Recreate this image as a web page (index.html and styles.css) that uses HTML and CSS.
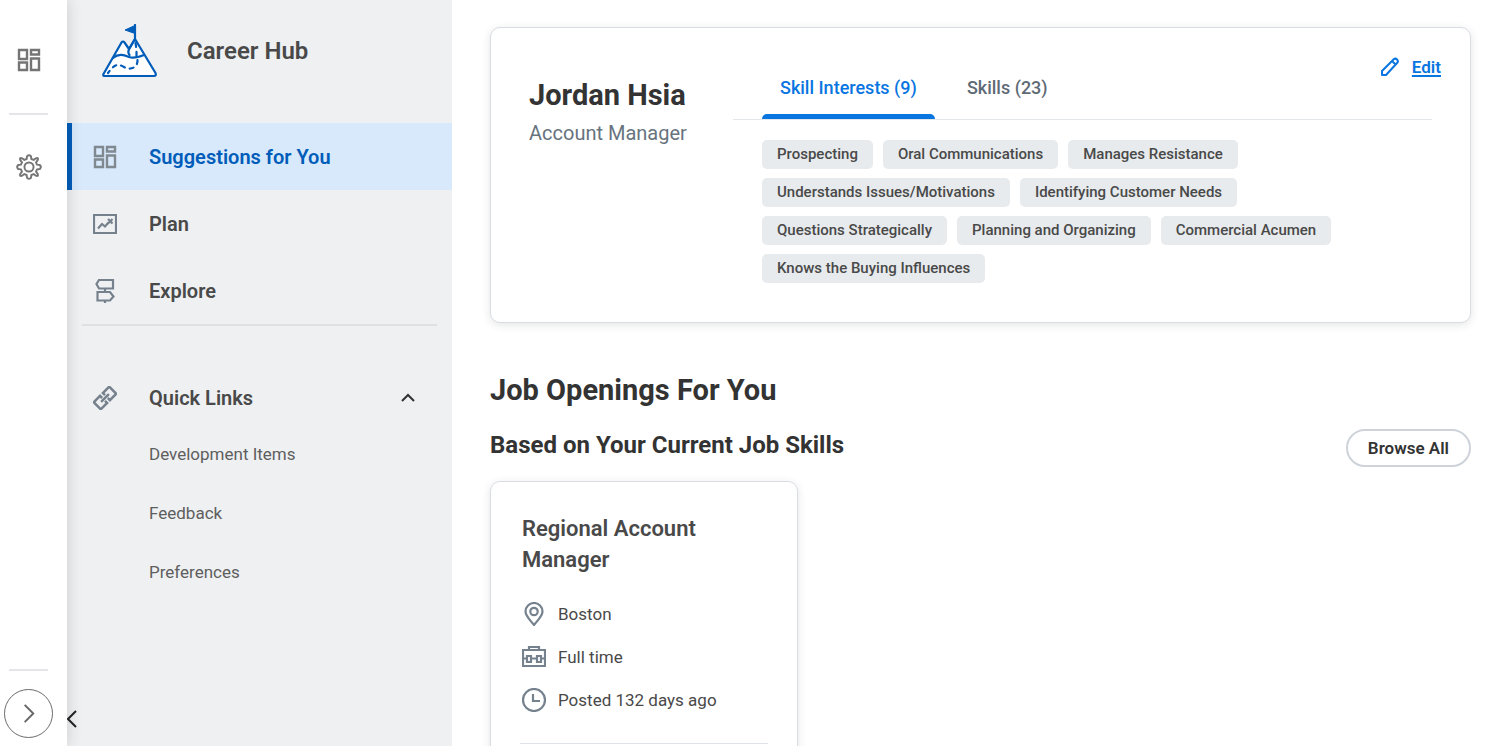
FILE: index.html
```html
<!doctype html>
<html lang="en">
<head>
  <meta charset="utf-8">
  <meta name="viewport" content="width=device-width, initial-scale=1">
  <title>Career Hub</title>
  <link rel="stylesheet" href="styles.css">
</head>
<body>
  <div class="app">

    <!-- Slim rail -->
    <aside class="rail">
      <button class="rail-button" aria-label="Dashboard">
        <svg class="icon icon-grid" viewBox="0 0 24 24"><path d="M2 2h8v9H2zM14 2h8v4.5h-8zM2 14.5h8V22H2zM14 10.5h8V22h-8z"/></svg>
      </button>
      <hr class="rail-line">
      <button class="rail-button" aria-label="Settings">
        <svg class="icon icon-gear" viewBox="0 0 24 24"><path d="M10.2 2 Q12 .2 13.8 2 L14.2 4.6 L16.3 5.5 L18.3 4 Q21 3 20 5.7 L18.5 7.7 L19.4 9.8 L22 10.2 Q23.8 12 22 13.8 L19.4 14.2 L18.5 16.3 L20 18.3 Q21 21 18.3 20 L16.3 18.5 L14.2 19.4 L13.8 22 Q12 23.8 10.2 22 L9.8 19.4 L7.7 18.5 L5.7 20 Q3 21 4 18.3 L5.5 16.3 L4.6 14.2 L2 13.8 Q.2 12 2 10.2 L4.6 9.8 L5.5 7.7 L4 5.7 Q3 3 5.7 4 L7.7 5.5 L9.8 4.6 Z"/><circle cx="12" cy="12" r="4.2"/></svg>
      </button>
      <div class="rail-bottom">
        <hr class="rail-line">
        <button class="expand-button" aria-label="Expand menu">
          <svg viewBox="0 0 24 24"><path d="M8 3l9 9-9 9"/></svg>
        </button>
      </div>
    </aside>

    <!-- Career Hub menu -->
    <nav class="sidebar">
      <header class="brand">
        <svg class="brand-logo" viewBox="0 0 56 54">
          <path class="snow" d="M1.5 50 L19.5 18.500 Q21 16.5 22.5 18.5 L27 25 L33 15 L53.500 49 Q54.5 52 52 52 H3 Q.5 52 1.5 50z"/>
          <path d="M27.5 31 Q25 28 28 23.5 L33 15 V1"/>
          <path d="M11 34 C17 29 22 31 27 33 S37 33 42 31"/>
          <path class="flag" d="M33 1.5 L23 6 L33 9.5z"/>
          <path class="trail" d="M33.5 19 L34.5 25 V32 M35.5 36 C36 43 29 47 22 43 S12 41 6 49"/>
        </svg>
        <span class="brand-name">Career Hub</span>
      </header>

      <a class="nav-item active" href="#suggestions">
        <svg class="icon icon-grid" viewBox="0 0 24 24"><path d="M2 2h8v9H2zM14 2h8v4.5h-8zM2 14.5h8V22H2zM14 10.5h8V22h-8z"/></svg>
        <span>Suggestions for You</span>
      </a>
      <a class="nav-item" href="#plan">
        <svg class="icon" viewBox="0 0 24 24"><path d="M1 3h22v18H1z"/><path d="M5 16.5l4-4.500 3 2.5 3.5-4M15 7l4.5 4.5M19.500 7L15 11.5"/></svg>
        <span>Plan</span>
      </a>
      <a class="nav-item" href="#explore">
        <svg class="icon" viewBox="0 0 24 24"><path d="M20 1H6L3.5 5 6 9.5h14zM4.500 13H17l3.5 4.500L17 21.5H4.5zM12 9v4M12 21v3"/></svg>
        <span>Explore</span>
      </a>

      <section class="quick-links">
        <button class="nav-item quick-toggle" aria-expanded="true">
          <svg class="icon icon-link" viewBox="0 0 24 24"><g transform="rotate(-45 12 12)"><path d="M10 14v3H1V7h9v3M14 10V7h9v10h-9v-3M6.5 12h11"/></g></svg>
          <span>Quick Links</span>
          <svg class="chevron" viewBox="0 0 14 14"><path d="M1 10l6-6 6 6"/></svg>
        </button>
        <a class="sub-item" href="#development">Development Items</a>
        <a class="sub-item" href="#feedback">Feedback</a>
        <a class="sub-item" href="#preferences">Preferences</a>
      </section>

      <button class="collapse-button" aria-label="Collapse menu">
        <svg viewBox="0 0 10 20"><path d="M9 2L1 10l8 8"/></svg>
      </button>
    </nav>

    <main class="content">
      <section class="card profile">
        <div class="person">
          <h1 class="title">Jordan Hsia</h1>
          <p class="job-title">Account Manager</p>
        </div>
        <div class="skills">
          <div class="tabs" role="tablist">
            <button class="tab selected" role="tab" aria-selected="true">Skill Interests (9)</button>
            <button class="tab" role="tab" aria-selected="false">Skills (23)</button>
          </div>
          <ul class="chips">
            <li class="chip">Prospecting</li>
            <li class="chip">Oral Communications</li>
            <li class="chip">Manages Resistance</li>
            <li class="chip">Understands Issues/Motivations</li>
            <li class="chip">Identifying Customer Needs</li>
            <li class="chip">Questions Strategically</li>
            <li class="chip">Planning and Organizing</li>
            <li class="chip">Commercial Acumen</li>
            <li class="chip">Knows the Buying Influences</li>
          </ul>
        </div>
        <a class="edit-link" href="#edit">
          <svg viewBox="0 0 20 20"><path d="M2 18v-4L14 2q1.5-1 3 .5t.5 3L6 18zM12 4l4 4"/></svg>
          <span>Edit</span>
        </a>
      </section>

      <h2 class="title">Job Openings For You</h2>
      <div class="section-head">
        <h3>Based on Your Current Job Skills</h3>
        <button class="browse-button">Browse All</button>
      </div>

      <article class="card job">
        <h4>Regional Account Manager</h4>
        <ul class="job-facts">
          <li>
            <svg class="icon" viewBox="0 0 24 24"><path d="M12 23C8 18 3.5 14 3.5 9.500a8.5 8.5 0 0 1 17 0C20.500 14 16 18 12 23z"/><circle cx="12" cy="9.5" r="3.7"/></svg>
            <span>Boston</span>
          </li>
          <li>
            <svg class="icon" viewBox="0 0 24 24"><path d="M1 5h22v16H1zM7 5V2h10v3M1 13.5h4M9 13.5h6M19 13.5h4M5 11h4v6H5zM15 11h4v6h-4z"/></svg>
            <span>Full time</span>
          </li>
          <li>
            <svg class="icon" viewBox="0 0 24 24"><circle cx="12" cy="12" r="11"/><path d="M11 6v7h7"/></svg>
            <span>Posted 132 days ago</span>
          </li>
        </ul>
        <hr class="job-line">
      </article>
    </main>

  </div>
</body>
</html>
```
FILE: styles.css
```css
/* ========== Base Styles ========== */
* {
  box-sizing: border-box;
}

body {
  margin: 0;
  font-family: Roboto, "Liberation Sans", sans-serif;
  font-size: 17px;
  color: #494949;
  background: #fff;
}

h1, h2, h3, h4, p, ul {
  margin: 0;
  padding: 0;
}

ul {
  list-style: none;
}

a {
  color: inherit;
  text-decoration: none;
}

button {
  margin: 0;
  padding: 0;
  border: none;
  background: none;
  font: inherit;
  color: inherit;
  cursor: pointer;
}

hr {
  margin: 0;
  border: none;
  border-top: 1px solid #dfe2e6;
}

svg {
  display: block;
  flex: none;
  fill: none;
  stroke: currentColor;
}

.icon {
  width: 24px;
  height: 24px;
  stroke-width: 2.2;
  color: #75818d;
}

.icon-grid {
  color: #808890;
  stroke-width: 2.4;
}

.icon-link {
  stroke-width: 2.5;
}

.app {
  display: flex;
  height: 100vh;
  overflow: hidden;
}

/* ========== Rail ========== */
.rail {
  display: flex;
  flex-direction: column;
  align-items: center;
  flex: none;
  width: 67px;
  padding: 48px 10px 8px 0;
  background: #fff;
  box-shadow: 0 0 14px rgba(31, 38, 46, 0.18);
  z-index: 1;
}

.rail .icon {
  color: #757575;
}

.rail .icon-gear {
  width: 26px;
  height: 26px;
  stroke-width: 1.8;
  stroke-linejoin: round;
}

.rail-line {
  width: 39px;
  border-top: 2px solid #e4e5eb;
}

.rail > .rail-line {
  margin: 41px 0 39px;
}

.rail-bottom {
  display: flex;
  flex-direction: column;
  align-items: center;
  gap: 18px;
  margin-top: auto;
}

.expand-button {
  display: grid;
  place-items: center;
  width: 49px;
  height: 49px;
  border: 1px solid #6b6b6b;
  border-radius: 50%;
  color: #666;
}

.expand-button svg {
  width: 23px;
  height: 23px;
  stroke-width: 2;
}

/* ========== Sidebar ========== */
.sidebar {
  display: flex;
  flex-direction: column;
  flex: none;
  width: 385px;
  background: #eff0f2;
  z-index: 0;
}

.brand {
  display: flex;
  align-items: center;
  gap: 29px;
  height: 123px;
  padding: 0 35px 22px;
}

.brand-logo {
  width: 56px;
  height: 54px;
  color: #005cb9;
  stroke-width: 2.2;
  stroke-linecap: round;
  stroke-linejoin: round;
}

.brand-logo .snow {
  fill: #fff;
}

.brand-logo .flag {
  fill: currentColor;
  stroke-width: 1;
}

.brand-logo .trail {
  stroke-dasharray: 4 5;
}

.brand-name {
  font-size: 24px;
  font-weight: 600;
}

.nav-item {
  display: flex;
  align-items: center;
  gap: 32px;
  height: 67px;
  padding: 0 36px 0 21px;
  border-left: 5px solid transparent;
  font-size: 20px;
  font-weight: 600;
}

.nav-item.active {
  border-color: #005cb9;
  background: #d7e9fb;
  color: #005cb9;
}

.quick-links {
  display: flex;
  flex-direction: column;
  margin: 0 15px;
  padding-top: 38px;
  border-top: 2px solid #dfe0e3;
}

.quick-toggle {
  padding: 0 22px 0 6px;
}

.chevron {
  width: 14px;
  height: 14px;
  margin-left: auto;
  color: #333;
  stroke-width: 2;
}

.sub-item {
  padding: 0 67px;
  line-height: 59px;
  color: #5e5e5e;
}

.quick-toggle + .sub-item {
  margin-top: -6px;
}

.collapse-button {
  width: 10px;
  margin-top: auto;
  margin-bottom: 17px;
  color: #222;
}

.collapse-button svg {
  width: 10px;
  height: 20px;
  stroke-width: 2;
}

/* ========== Content ========== */
.content {
  flex: 1;
  min-width: 0;
  padding: 27px 29px 0 38px;
  overflow: hidden;
}

.card {
  border: 1px solid #d9dce3;
  border-radius: 10px;
  background: #fff;
  box-shadow: 0 2px 8px rgba(31, 38, 46, 0.12);
}

.title {
  font-size: 29px;
  font-weight: 700;
  line-height: 38px;
  color: #333;
}

/* ========== Profile Card ========== */
.profile {
  display: flex;
  position: relative;
  padding: 28px 38px 39px;
}

.person {
  flex: none;
  width: 204px;
  padding-top: 20px;
}

.job-title {
  font-size: 20px;
  line-height: 38px;
  color: #67737e;
}

.skills {
  flex: 1;
}

.tabs {
  display: flex;
  gap: 14px;
  padding: 0 29px;
  border-bottom: 1px solid #e4e7ea;
}

.tab {
  display: flex;
  flex-direction: column;
  height: 63px;
  padding: 0 18px;
  font-size: 18px;
  font-weight: 500;
  line-height: 64px;
  color: #5e6a75;
}

.tab.selected {
  color: #0875e1;
}

.tab.selected::after {
  content: "";
  height: 5px;
  margin: -6px -18px 0;
  border-radius: 5px 5px 0 0;
  background: #0875e1;
}

.chips {
  display: flex;
  flex-wrap: wrap;
  gap: 9px 10px;
  padding: 20px 60px 0 29px;
}

.chip {
  padding: 0 15px;
  border-radius: 5px;
  background: #e8ebed;
  font-size: 15px;
  font-weight: 500;
  line-height: 29px;
}

.edit-link {
  position: absolute;
  top: 27px;
  right: 29px;
  display: flex;
  align-items: center;
  gap: 12px;
  font-weight: 600;
  line-height: 24px;
  color: #0875e1;
}

.edit-link svg {
  width: 20px;
  height: 20px;
  stroke-width: 2;
  stroke-linejoin: round;
}

.edit-link span {
  text-decoration: underline;
  text-decoration-thickness: 2px;
  text-underline-offset: 2px;
}

/* ========== Job Openings ========== */
h2.title {
  margin-top: 48px;
}

.section-head {
  display: flex;
  align-items: flex-end;
  justify-content: space-between;
  margin: 20px 0 14px;
}

.section-head h3 {
  font-size: 24px;
  font-weight: 700;
  line-height: 32px;
  padding-bottom: 6px;
  color: #333;
}

.browse-button {
  padding: 0 20px;
  border: 2px solid #ced3d9;
  border-radius: 19px;
  font-weight: 600;
  line-height: 34px;
  color: #333;
}

.job {
  width: 308px;
  padding: 31px 29px;
}

.job h4 {
  padding: 0 2px;
  font-size: 22px;
  font-weight: 600;
  line-height: 31px;
}

.job-facts {
  display: flex;
  flex-direction: column;
  gap: 19px;
  padding: 27px 2px 31px;
}

.job-facts li {
  display: flex;
  align-items: center;
  gap: 12px;
  line-height: 24px;
}
```
